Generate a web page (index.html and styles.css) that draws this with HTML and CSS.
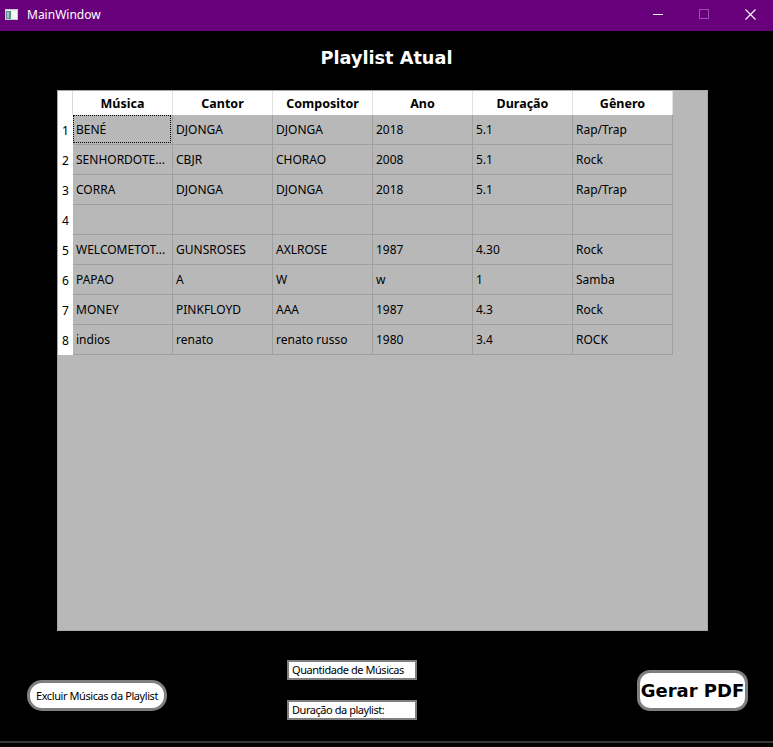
FILE: index.html
```html
<!DOCTYPE html>
<html lang="pt">
<head>
<meta charset="utf-8">
<title>MainWindow</title>
<link rel="stylesheet" href="styles.css">
</head>
<body>
<div class="window">
  <div class="titlebar">
    <svg class="app-icon" width="13" height="11" viewBox="0 0 13 11">
      <rect x="0.5" y="0.5" width="12" height="10" fill="#e8eef0" stroke="#c8d0d4"/>
      <rect x="1" y="2" width="5" height="8" fill="#5f8f8a"/>
      <rect x="2" y="3" width="2" height="6" fill="#9fc3c0"/>
      <rect x="7" y="2" width="5" height="8" fill="#f4f6f8"/>
    </svg>
    <span class="win-title">MainWindow</span>
    <div class="controls">
      <span class="ctl"><svg width="10" height="10" viewBox="0 0 10 10"><line x1="0" y1="5.5" x2="10" y2="5.5" stroke="#fff" stroke-width="1"/></svg></span>
      <span class="ctl"><svg width="10" height="10" viewBox="0 0 10 10"><rect x="0.5" y="0.5" width="9" height="9" fill="none" stroke="#9a4fae" stroke-width="1"/></svg></span>
      <span class="ctl"><svg width="11" height="11" viewBox="0 0 11 11"><path d="M0.5 0.5 L10.5 10.5 M10.5 0.5 L0.5 10.5" stroke="#fff" stroke-width="1.1"/></svg></span>
    </div>
  </div>

  <main class="content">
    <h1 class="page-title">Playlist Atual</h1>

    <div class="table-frame">
      <div class="grid">
        <div class="corner"></div>
        <div class="hcell">Música</div>
        <div class="hcell">Cantor</div>
        <div class="hcell">Compositor</div>
        <div class="hcell">Ano</div>
        <div class="hcell">Duração</div>
        <div class="hcell">Gênero</div>

        <div class="rnum">1</div>
        <div class="cell focus">BENÉ</div><div class="cell">DJONGA</div><div class="cell">DJONGA</div><div class="cell">2018</div><div class="cell">5.1</div><div class="cell">Rap/Trap</div>

        <div class="rnum">2</div>
        <div class="cell">SENHORDOTE...</div><div class="cell">CBJR</div><div class="cell">CHORAO</div><div class="cell">2008</div><div class="cell">5.1</div><div class="cell">Rock</div>

        <div class="rnum">3</div>
        <div class="cell">CORRA</div><div class="cell">DJONGA</div><div class="cell">DJONGA</div><div class="cell">2018</div><div class="cell">5.1</div><div class="cell">Rap/Trap</div>

        <div class="rnum">4</div>
        <div class="cell"></div><div class="cell"></div><div class="cell"></div><div class="cell"></div><div class="cell"></div><div class="cell"></div>

        <div class="rnum">5</div>
        <div class="cell">WELCOMETOT...</div><div class="cell">GUNSROSES</div><div class="cell">AXLROSE</div><div class="cell">1987</div><div class="cell">4.30</div><div class="cell">Rock</div>

        <div class="rnum">6</div>
        <div class="cell">PAPAO</div><div class="cell">A</div><div class="cell">W</div><div class="cell">w</div><div class="cell">1</div><div class="cell">Samba</div>

        <div class="rnum">7</div>
        <div class="cell">MONEY</div><div class="cell">PINKFLOYD</div><div class="cell">AAA</div><div class="cell">1987</div><div class="cell">4.3</div><div class="cell">Rock</div>

        <div class="rnum">8</div>
        <div class="cell">indios</div><div class="cell">renato</div><div class="cell">renato russo</div><div class="cell">1980</div><div class="cell">3.4</div><div class="cell">ROCK</div>
      </div>
    </div>

    <div class="bottom">
      <button class="pill-btn">Excluir Músicas da Playlist</button>
      <div class="labels">
        <div class="info-label">Quantidade de Músicas</div>
        <div class="info-label">Duração da playlist:</div>
      </div>
      <button class="pdf-btn">Gerar PDF</button>
    </div>
  </main>
  <div class="statusbar"></div>
</div>
</body>
</html>
```

FILE: styles.css
```css
* { box-sizing: border-box; }

html, body {
  margin: 0;
  padding: 0;
  background: #000;
}

.window {
  width: 773px;
  height: 747px;
  background: #000;
  display: flex;
  flex-direction: column;
  overflow: hidden;
}

.titlebar {
  height: 31px;
  flex: none;
  background: #68007c;
  display: flex;
  align-items: center;
  padding-left: 5px;
  color: #fff;
  font-family: "Noto Sans", "Open Sans", sans-serif;
  font-size: 12px;
}

.app-icon { display: block; margin-top: -2px; }

.win-title {
  margin-left: 9px;
  margin-top: -2px;
}

.controls {
  margin-left: auto;
  display: flex;
  height: 100%;
}

.ctl {
  width: 46px;
  height: 100%;
  display: flex;
  align-items: center;
  justify-content: center;
  padding-bottom: 3px;
}

.content {
  flex: none;
  height: 710px;
  display: flex;
  flex-direction: column;
}

.page-title {
  margin: 14px 0 0 0;
  height: 45px;
  text-align: center;
  color: #fff;
  font-family: "DejaVu Sans", sans-serif;
  font-weight: bold;
  font-size: 17.7px;
  line-height: 26px;
}

.table-frame {
  margin-left: 57px;
  width: 651px;
  height: 541px;
  border: 1px solid #a8a8a8;
  background: #b8b8b8;
  flex: none;
}

.grid {
  display: grid;
  grid-template-columns: 15px repeat(6, 100px);
  grid-template-rows: 24px repeat(8, 30px);
  font-family: "Noto Sans", "Open Sans", sans-serif;
  font-size: 12px;
  color: #000;
}

.corner {
  background: #fff;
  border-right: 1px solid #d9d9d9;
}

.hcell {
  background: #fff;
  border-right: 1px solid #e3e3e3;
  font-weight: bold;
  font-size: 12.5px;
  display: flex;
  align-items: center;
  justify-content: center;
  padding-top: 1px;
}

.rnum {
  background: #fff;
  display: flex;
  align-items: center;
  justify-content: center;
  font-size: 12px;
  padding-top: 1px;
}

.cell {
  position: relative;
  border-right: 1px solid #a0a0a0;
  border-bottom: 1px solid #a0a0a0;
  display: flex;
  align-items: center;
  padding-left: 3px;
  white-space: nowrap;
  overflow: hidden;
}

.cell.focus::after {
  content: "";
  position: absolute;
  left: 0;
  top: 0;
  right: 1px;
  bottom: 1px;
  border: 1px dotted #000;
}

.bottom {
  flex: none;
  height: 110px;
  display: flex;
  align-items: flex-start;
  padding-left: 27px;
  padding-right: 25px;
}

.pill-btn {
  margin-top: 49px;
  width: 140px;
  height: 31px;
  border: 3px solid #7f7f7f;
  border-radius: 15px;
  background: #fff;
  color: #000;
  font-family: "Noto Sans", "Open Sans", sans-serif;
  font-size: 11px;
  letter-spacing: -0.42px;
  padding: 0 0 1px 0;
  white-space: nowrap;
}

.labels {
  margin-left: 120px;
  margin-top: 29px;
  display: flex;
  flex-direction: column;
  gap: 20px;
}

.info-label {
  width: 130px;
  height: 20px;
  border: 2px solid #7f7f7f;
  background: #fff;
  color: #000;
  font-family: "Noto Sans", "Open Sans", sans-serif;
  font-size: 11px;
  letter-spacing: -0.45px;
  line-height: 15px;
  padding-left: 3px;
  white-space: nowrap;
}

.pdf-btn {
  margin-left: auto;
  margin-top: 39px;
  width: 111px;
  height: 41px;
  border: 3px solid #7f7f7f;
  border-radius: 13px;
  background: #fff;
  color: #000;
  font-family: "DejaVu Sans", sans-serif;
  font-weight: bold;
  font-size: 18px;
  padding: 0;
}

.statusbar {
  flex: none;
  height: 6px;
  border-top: 2px solid #383838;
  background: #000;
}
```
